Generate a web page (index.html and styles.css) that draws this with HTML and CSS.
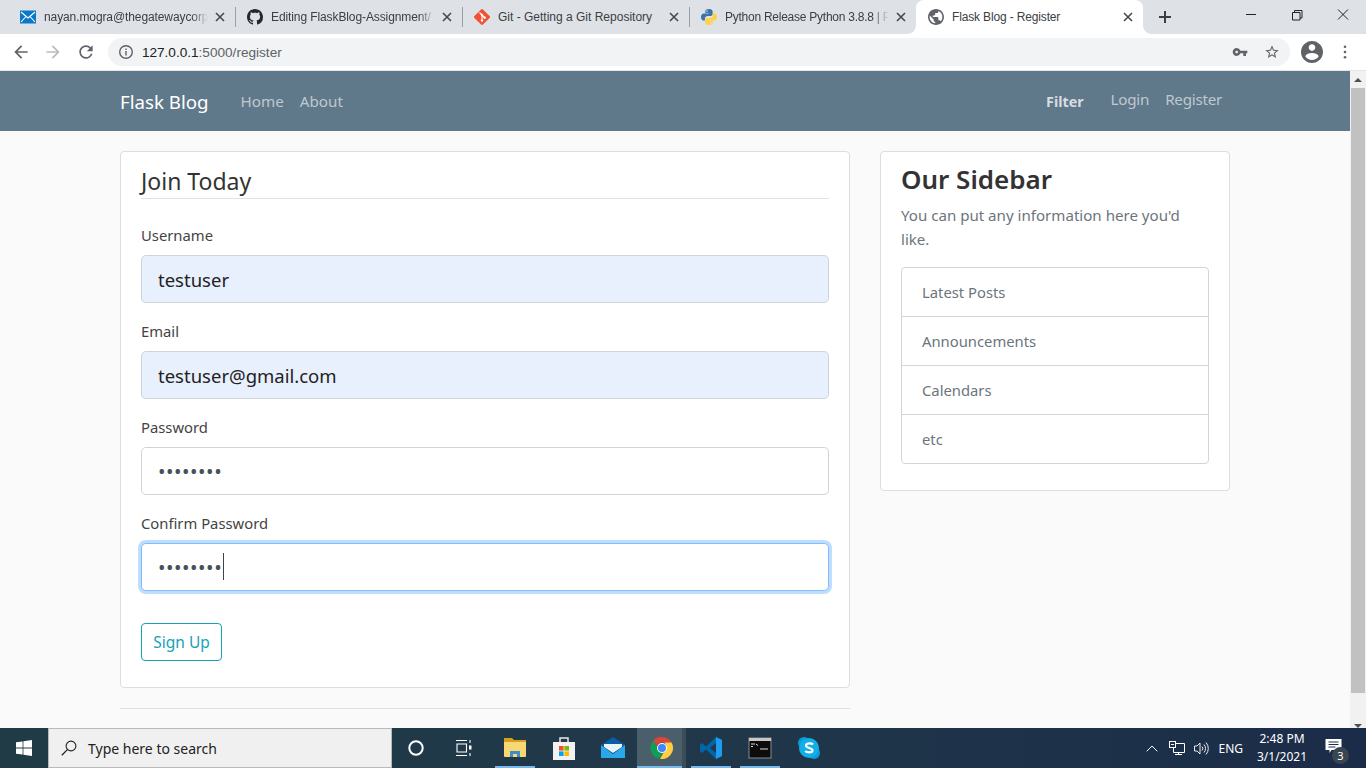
FILE: index.html
```html
<!DOCTYPE html>
<html lang="en">
<head>
<meta charset="utf-8">
<title>Flask Blog - Register</title>
<link rel="stylesheet" href="styles.css">
</head>
<body>
<header class="tabstrip">
  <div class="tab">
    <svg class="favicon" viewBox="0 0 16 16"><rect y="1.5" width="16" height="13" fill="#0a78c8"/><path d="M1 3l7 6 7-6M1 13l5-5.5M15 13l-5-5.5" fill="none" stroke="#fff" stroke-width="1.1"/></svg>
    <span class="tab-title">nayan.mogra@thegatewaycorp</span>
    <svg class="tab-x" viewBox="0 0 10 10"><path d="M1 1l8 8M9 1l-8 8"/></svg>
  </div>
  <div class="tab">
    <svg class="favicon" viewBox="0 0 16 16"><path fill="#24292e" d="M8 0C3.58 0 0 3.58 0 8c0 3.54 2.29 6.53 5.47 7.59.4.07.55-.17.55-.38 0-.19-.01-.82-.01-1.49-2.01.37-2.53-.49-2.69-.94-.09-.23-.48-.94-.82-1.13-.28-.15-.68-.52-.01-.53.63-.01 1.08.58 1.23.82.72 1.21 1.87.87 2.33.66.07-.52.28-.87.51-1.07-1.78-.2-3.64-.89-3.64-3.95 0-.87.31-1.59.82-2.15-.08-.2-.36-1.02.08-2.12 0 0 .67-.21 2.2.82.64-.18 1.32-.27 2-.27.68 0 1.36.09 2 .27 1.53-1.04 2.2-.82 2.2-.82.44 1.1.16 1.92.08 2.12.51.56.82 1.27.82 2.15 0 3.07-1.87 3.75-3.65 3.95.29.25.54.73.54 1.48 0 1.07-.01 1.93-.01 2.2 0 .21.15.46.55.38A8.013 8.013 0 0016 8c0-4.42-3.58-8-8-8z"/></svg>
    <span class="tab-title">Editing FlaskBlog-Assignment/</span>
    <svg class="tab-x" viewBox="0 0 10 10"><path d="M1 1l8 8M9 1l-8 8"/></svg>
  </div>
  <div class="tab">
    <svg class="favicon" viewBox="0 0 16 16"><path fill="#f05033" d="M7.1.4a1.3 1.3 0 011.8 0l6.7 6.7a1.3 1.3 0 010 1.8l-6.7 6.7a1.3 1.3 0 01-1.8 0L.4 8.900a1.300 1.300 0 010-1.800z"/><path d="M5.500 3.500l5 5M8 6v6" stroke="#fff" stroke-width="1.100" fill="none"/><circle cx="8" cy="6" r="1.200" fill="#fff"/><circle cx="8" cy="11.500" r="1.200" fill="#fff"/><circle cx="10.700" cy="8.700" r="1.200" fill="#fff"/></svg>
    <span class="tab-title tab-title-full">Git - Getting a Git Repository</span>
    <svg class="tab-x" viewBox="0 0 10 10"><path d="M1 1l8 8M9 1l-8 8"/></svg>
  </div>
  <div class="tab">
    <svg class="favicon" viewBox="0 0 16 16"><path fill="#3b75a8" d="M8 0C5 0 4.300 1 4.300 2.500V4H8v.6H2.800C1.200 4.600 0 5.800 0 8s1.100 3.500 2.500 3.500h1.400V9.700c0-1.500 1.200-2.700 2.700-2.700h3c1.100 0 2-.9 2-2V2.500C11.600 1 10.500 0 8 0zM6 1.300a.8.8 0 110 1.600.8.8 0 010-1.600z"/><path fill="#fdd23e" d="M8 16c3 0 3.700-1 3.700-2.500V12H8v-.6h5.200c1.600 0 2.800-1.200 2.800-3.400s-1.100-3.500-2.500-3.500h-1.400v1.800c0 1.500-1.200 2.700-2.700 2.700h-3c-1.100 0-2 .9-2 2v2.500C4.400 15 5.500 16 8 16zm2-1.300a.8.8 0 110-1.600.8.8 0 010 1.600z"/></svg>
    <span class="tab-title tab-title-py">Python Release Python 3.8.8 | P</span>
    <svg class="tab-x" viewBox="0 0 10 10"><path d="M1 1l8 8M9 1l-8 8"/></svg>
  </div>
  <div class="tab tab-active">
    <svg class="favicon" viewBox="2 2 20 20"><path fill="#5f6368" d="M12 2C6.48 2 2 6.48 2 12s4.480 10 10 10 10-4.480 10-10S17.520 2 12 2zm-1 17.930c-3.950-.49-7-3.850-7-7.930 0-.62.08-1.210.21-1.790L9 15v1c0 1.100.9 2 2 2v1.930zm6.900-2.540c-.26-.81-1-1.390-1.900-1.390h-1v-3c0-.55-.45-1-1-1H8v-2h2c.55 0 1-.45 1-1V7h2c1.100 0 2-.9 2-2v-.41c2.930 1.190 5 4.060 5 7.410 0 2.080-.8 3.970-2.100 5.390z"/></svg>
    <span class="tab-title tab-title-full tab-title-active">Flask Blog - Register</span>
    <svg class="tab-x" viewBox="0 0 10 10"><path d="M1 1l8 8M9 1l-8 8"/></svg>
  </div>
  <svg class="new-tab" viewBox="0 0 12 12"><path d="M6 0v12M0 6h12"/></svg>
  <div class="win-controls">
    <svg class="win-btn" viewBox="0 0 46 30"><path d="M18 14.500h10"/></svg>
    <svg class="win-btn" viewBox="0 0 46 30"><path d="M18.500 12.500h7.500v7.500h-7.500zM20.500 12.500v-2h7.500v7.500h-2"/></svg>
    <svg class="win-btn" viewBox="0 0 46 30"><path d="M18 9.500l10 10M28 9.500l-10 10"/></svg>
  </div>
</header>

<div class="toolbar">
  <svg class="tool-icon" viewBox="0 0 24 24"><path d="M20 11H7.830l5.590-5.590L12 4l-8 8 8 8 1.410-1.410L7.830 13H20v-2z"/></svg>
  <svg class="tool-icon tool-off" viewBox="0 0 24 24"><path d="M4 11h12.170l-5.590-5.590L12 4l8 8-8 8-1.410-1.410L16.170 13H4v-2z"/></svg>
  <svg class="tool-icon" viewBox="0 0 24 24"><path d="M17.650 6.350A7.958 7.958 0 0012 4c-4.420 0-7.990 3.580-7.990 8s3.570 8 7.990 8c3.730 0 6.840-2.550 7.730-6h-2.080A5.990 5.990 0 0112 18c-3.310 0-6-2.690-6-6s2.690-6 6-6c1.660 0 3.140.69 4.220 1.780L13 11h7V4l-2.350 2.350z"/></svg>
  <div class="omnibox">
    <svg class="omni-info" viewBox="0 0 16 16"><circle cx="8" cy="8" r="6.300" fill="none" stroke="#5f6368" stroke-width="1.400"/><path d="M7.300 7h1.400v4.500H7.300zM7.300 4.500h1.400v1.400H7.300z" fill="#5f6368"/></svg>
    <span class="url"><span class="url-host">127.0.0.1</span>:5000/register</span>
    <svg class="omni-icon" viewBox="0 0 24 24"><path d="M12.650 10A5.990 5.990 0 007 6c-3.310 0-6 2.690-6 6s2.690 6 6 6a5.990 5.990 0 005.650-4H17v4h4v-4h2v-4H12.650zM7 14c-1.100 0-2-.9-2-2s.9-2 2-2 2 .9 2 2-.9 2-2 2z"/></svg>
    <svg class="omni-icon" viewBox="0 0 24 24"><path d="M22 9.240l-7.190-.62L12 2 9.190 8.630 2 9.240l5.460 4.730L5.820 21 12 17.270 18.180 21l-1.630-7.030L22 9.240zM12 15.400l-3.760 2.270 1-4.280-3.320-2.880 4.380-.38L12 6.100l1.710 4.040 4.380.38-3.320 2.880 1 4.280L12 15.400z"/></svg>
  </div>
  <svg class="avatar" viewBox="2 2 20 20"><path d="M12 2C6.480 2 2 6.480 2 12s4.480 10 10 10 10-4.480 10-10S17.520 2 12 2zm0 3c1.660 0 3 1.340 3 3s-1.340 3-3 3-3-1.340-3-3 1.340-3 3-3zm0 14.200c-2.500 0-4.710-1.280-6-3.220.03-1.990 4-3.080 6-3.080 1.990 0 5.970 1.090 6 3.080-1.290 1.940-3.500 3.220-6 3.220z"/></svg>
  <svg class="kebab" viewBox="0 0 4 16"><circle cx="2" cy="2" r="1.500"/><circle cx="2" cy="8" r="1.500"/><circle cx="2" cy="14" r="1.500"/></svg>
</div>

<div class="viewport">
  <div class="page">
    <nav class="navbar">
      <a class="brand">Flask Blog</a>
      <a class="nav-link">Home</a>
      <a class="nav-link">About</a>
      <span class="nav-spacer"></span>
      <a class="nav-filter">Filter</a>
      <a class="nav-link nav-link-up">Login</a>
      <a class="nav-link nav-link-up">Register</a>
    </nav>
    <main class="container">
      <div class="col-main">
        <form class="card form-card">
          <legend class="legend">Join Today</legend>
          <div class="field">
            <label class="label">Username</label>
            <input class="input autofilled" type="text" value="testuser">
          </div>
          <div class="field">
            <label class="label">Email</label>
            <input class="input autofilled" type="text" value="testuser@gmail.com">
          </div>
          <div class="field">
            <label class="label">Password</label>
            <input class="input input-pw" type="password" value="password">
          </div>
          <div class="field">
            <label class="label">Confirm Password</label>
            <div class="input-wrap">
              <input class="input input-pw input-focus" type="password" value="password">
              <span class="caret"></span>
            </div>
          </div>
          <button class="btn" type="button">Sign Up</button>
        </form>
        <hr class="rule">
      </div>
      <aside class="col-side">
        <div class="card side-card">
          <h3 class="side-title">Our Sidebar</h3>
          <p class="side-text">You can put any information here you'd like.</p>
          <ul class="list">
            <li class="list-item">Latest Posts</li>
            <li class="list-item">Announcements</li>
            <li class="list-item">Calendars</li>
            <li class="list-item">etc</li>
          </ul>
        </div>
      </aside>
    </main>
  </div>
  <div class="scrollbar">
    <svg class="scroll-arrow" viewBox="0 0 16 17"><path d="M4 11l4-4 4 4z"/></svg>
    <div class="scroll-track"><div class="scroll-thumb"></div></div>
    <svg class="scroll-arrow" viewBox="0 0 16 17"><path d="M4 6l4 4 4-4z"/></svg>
  </div>
</div>

<footer class="taskbar">
  <div class="start">
    <svg class="start-logo" viewBox="0 0 16 16"><path fill="#fff" d="M0 2.300l6.600-.9v6.200H0zM7.400 1.300L16 0v7.600H7.400zM0 8.400h6.600v6.200L0 13.700zM7.400 8.400H16V16l-8.600-1.300z"/></svg>
  </div>
  <div class="search">
    <svg class="search-icon" viewBox="0 0 16 16"><circle cx="10" cy="6" r="4.900" fill="none" stroke="#222" stroke-width="1.100"/><path d="M6.400 9.600L.8 15.200" stroke="#222" stroke-width="1.300"/></svg>
    <span class="search-text">Type here to search</span>
  </div>
  <div class="task-btn task-wide">
    <svg class="task-svg" viewBox="0 0 18 18"><circle cx="9" cy="9" r="6.700" fill="none" stroke="#fff" stroke-width="2"/></svg>
  </div>
  <div class="task-btn task-wide">
    <svg class="task-svg" viewBox="0 0 18 18"><path d="M1 1.500h11M1 16.500h11M2 5h9.500v8H2zM15 1v3M15 14v3" fill="none" stroke="#fff" stroke-width="1.100"/><rect x="14" y="6.500" width="2.500" height="4" fill="#fff"/></svg>
  </div>
  <div class="task-gap"></div>
  <div class="task-btn task-open">
    <svg class="app-icon" viewBox="0 0 24 24"><path fill="#d6a21e" d="M1 2h8l2 2h12v5H1z"/><path fill="#f8d775" d="M1 6h22v14a1 1 0 01-1 1H2a1 1 0 01-1-1z"/><path fill="#3f8ccc" d="M7 15h10v6h-3v-3h-4v3H7z"/></svg>
  </div>
  <div class="task-btn">
    <svg class="app-icon" viewBox="0 0 24 24"><path fill="none" stroke="#e8e8e8" stroke-width="1.500" d="M8 6V2h8v4"/><path fill="#f2f2f2" d="M1 6h22v18H1z"/><rect x="7" y="10" width="4.600" height="4.600" fill="#f25022"/><rect x="12.400" y="10" width="4.600" height="4.600" fill="#7fba00"/><rect x="7" y="15.400" width="4.600" height="4.600" fill="#00a4ef"/><rect x="12.400" y="15.400" width="4.600" height="4.600" fill="#ffb900"/></svg>
  </div>
  <div class="task-btn">
    <svg class="app-icon" viewBox="0 0 24 24"><path fill="#0a5ea8" d="M0 9l12-8 12 8-12 7z"/><path fill="#e8f4fc" d="M3 8h18v3l-9 6-9-6z"/><path fill="#28a8ea" d="M0 9l12 9 12-9v13H0z"/></svg>
  </div>
  <div class="task-btn task-active">
    <svg class="app-icon" viewBox="0 0 24 24"><path fill="#db4437" d="M12 1a11 11 0 019.530 5.500H12a5.500 5.500 0 00-5.200 3.700L3.300 4.400A11 11 0 0112 1z"/><path fill="#0f9d58" d="M3.300 4.400l4.700 8.200a5.500 5.500 0 004.600 4.900L8.900 22.600A11 11 0 013.300 4.400z"/><path fill="#ffcd40" d="M21.530 6.500A11 11 0 0110 22.800l4.800-8.300a5.500 5.500 0 00-.6-8z"/><circle cx="12" cy="12" r="5" fill="#fff"/><circle cx="12" cy="12" r="4" fill="#4285f4"/></svg>
  </div>
  <div class="task-btn task-open">
    <svg class="app-icon" viewBox="0 0 24 24"><path fill="#0065a9" d="M17 1l6 3v16l-6 3-10-9.500L3 17 1 15.500v-7L3 7l4 3.500zm0 6l-6 5 6 5z"/><path fill="#1f9cf0" d="M17 1l6 3v16l-6 3z"/></svg>
  </div>
  <div class="task-btn task-open">
    <svg class="app-icon" viewBox="0 0 24 24"><rect x="1" y="2" width="22" height="20" fill="#0c0c0c" stroke="#8a8a8a"/><rect x="1" y="2" width="22" height="3" fill="#c8c8c8"/><path d="M3 8h4M3 10.500h2M8 8l2 1.500M12 13h8" stroke="#ddd" stroke-width="1" fill="none"/></svg>
  </div>
  <div class="task-btn">
    <svg class="app-icon" viewBox="0 0 24 24"><circle cx="7" cy="7" r="6" fill="#0a9bdc"/><circle cx="17" cy="17" r="6" fill="#0a9bdc"/><circle cx="12" cy="12" r="10" fill="#12aee8"/><path d="M16 8.500c-1-1.200-6.500-2-7 1-.4 3 7 2 6.500 5.200-.5 2.300-5.800 2-7.300.3" fill="none" stroke="#fff" stroke-width="2.200"/></svg>
  </div>
  <span class="task-spacer"></span>
  <svg class="tray-chevron" viewBox="0 0 12 7"><path d="M.7 6.300L6 1l5.300 5.300" fill="none" stroke="#fff"/></svg>
  <svg class="tray-net" viewBox="0 0 16 15"><path d="M4.500 2.500h11v9h-11zM9.500 11.500v2M6 13.500h7" fill="none" stroke="#fff"/><rect x=".5" y=".5" width="6" height="6" fill="#1c2f48" stroke="#fff"/><path d="M2 3.500h3" stroke="#fff"/></svg>
  <svg class="tray-vol" viewBox="0 0 16 15"><path d="M.5 5h2.500l3-3v11l-3-3H.5zM8 5.500a3 3 0 010 4M10 3.500a6 6 0 010 8M12 1.500a9 9 0 010 12" fill="none" stroke="#fff" stroke-width=".9"/></svg>
  <span class="tray-lang">ENG</span>
  <div class="clock"><span>2:48 PM</span><span>3/1/2021</span></div>
  <div class="notify">
    <svg class="notify-icon" viewBox="0 0 16 14"><path fill="#fff" d="M0 0h16v11H6l-2 3v-3H0z"/><path d="M3 3h10M3 5.500h10M3 8h7" stroke="#1c2f48"/></svg>
    <span class="notify-badge">3</span>
  </div>
</footer>
</body>
</html>
```
FILE: styles.css
```css
* { box-sizing: border-box; }
html, body { margin: 0; height: 768px; overflow: hidden; }
body { display: flex; flex-direction: column; width: 1366px; font-family: "Noto Sans", sans-serif; color: #444; }

/* browser tabs */
.tabstrip { display: flex; align-items: stretch; height: 34px; padding-left: 8px; background: #dee1e6; flex: none; }
.tab { display: flex; align-items: center; width: 227px; height: 34px; padding: 0 10px 0 12px; position: relative; }
.tab:nth-child(-n+3)::after { content: ""; position: absolute; right: -1px; top: 7px; height: 20px; width: 1px; background: #9aa0a6; }
.tab-active { background: #fff; border-radius: 8px 8px 0 0; }
.tab-active::before, .tab-active::after { content: ""; position: absolute; bottom: 0; width: 8px; height: 8px; }
.tab-active::before { left: -8px; background: radial-gradient(circle at 0 0, #dee1e6 7.500px, #fff 8px); }
.tab-active::after { right: -8px; background: radial-gradient(circle at 100% 0, #dee1e6 7.500px, #fff 8px); }
.favicon { width: 16px; height: 16px; flex: none; margin-right: 8px; }
.tab-title { flex: 1; min-width: 0; white-space: nowrap; overflow: hidden; font-family: "Liberation Sans", sans-serif; font-size: 12px; letter-spacing: -.1px; color: #3c4043; -webkit-mask-image: linear-gradient(to right, #000 90%, transparent 100%); mask-image: linear-gradient(to right, #000 90%, transparent 100%); }
.tab-title-full { letter-spacing: 0; -webkit-mask-image: none; mask-image: none; }
.tab-title-active { letter-spacing: -.15px; }
.tab-title-py { letter-spacing: -.25px; }
.tab-x { width: 10px; height: 10px; flex: none; margin-left: 7px; fill: none; stroke: #45484c; stroke-width: 1.6; }
.new-tab { width: 12px; height: 12px; flex: none; align-self: center; margin: 0 0 0 16px; fill: none; stroke: #3c4043; stroke-width: 2; }
.win-controls { margin-left: auto; display: flex; align-self: flex-start; }
.win-btn { width: 46px; height: 30px; fill: none; stroke: #222; stroke-width: 1; }

/* toolbar */
.toolbar { display: flex; align-items: center; height: 37px; padding: 0 8px 0 11px; background: #fff; border-bottom: 1px solid #e3e5e8; flex: none; }
.tool-icon { width: 20px; height: 20px; flex: none; margin-right: 12.300px; fill: #5f6368; }
.tool-off { fill: #b9bcc0; }
.omnibox { display: flex; align-items: center; flex: 1; height: 28px; margin: 0 11px 0 0; padding: 0 10px 0 10px; background: #f1f3f4; border-radius: 14px; }
.omni-info { width: 16px; height: 16px; flex: none; }
.url { flex: 1; margin-left: 8px; font-family: "Liberation Sans", sans-serif; font-size: 13.600px; color: #5f6368; }
.url-host { color: #202124; }
.omni-icon { width: 16px; height: 16px; flex: none; margin-left: 16px; fill: #5f6368; }
.avatar { width: 22px; height: 22px; flex: none; fill: #5f6368; }
.kebab { width: 4px; height: 14px; flex: none; margin: 0 11px 0 20px; fill: #5f6368; }

/* page */
.viewport { display: flex; height: 657px; flex: none; overflow: hidden; background: #fafafa; }
.page { flex: 1; min-width: 0; }
.navbar { display: flex; align-items: center; height: 60px; padding: 0 120px; background: #5f788a; }
.brand { font-size: 18.700px; line-height: 30px; color: #fff; margin-right: 32px; position: relative; top: 1px; }
.nav-link { font-size: 15.200px; color: rgba(255,255,255,.6); margin-right: 16px; }
.nav-link-up { position: relative; top: -2px; letter-spacing: -.25px; }
.nav-link:last-child { margin-right: 8px; }
.nav-spacer { flex: 1; }
.nav-filter { font-size: 14.300px; font-weight: 700; color: rgba(255,255,255,.75); margin-right: 27px; }
.container { display: flex; padding: 20px 120px 0; }
.col-main { width: 730px; flex: none; }
.col-side { width: 350px; flex: none; margin-left: 30px; }
.card { background: #fff; border: 1px solid #ddd; border-radius: 4px; padding: 10px 20px 26px; }
.form-card { height: 537px; }
.legend { display: block; width: 100%; font-size: 23px; line-height: 38px; color: #333; border-bottom: 1px solid #dee2e6; height: 37px; padding: 0; margin-bottom: 24px; }
.field { margin-bottom: 16px; height: 80px; }
.label { display: block; font-size: 14.800px; line-height: 24px; margin-bottom: 8px; color: #444; height: 24px; }
.input { display: block; width: 100%; height: 48px; padding: 0 16px; font: 18.500px/30px "Noto Sans", sans-serif; color: #222; background: #fff; border: 1px solid #ced4da; border-radius: 4.800px; outline: none; }
.autofilled { background: #e8f0fe; }
.input-pw { font-size: 20px; letter-spacing: .5px; color: #495057; }
.input-focus { border-color: #80bdff; box-shadow: 0 0 0 3px rgba(0,123,255,.25); }
.input-wrap { position: relative; }
.caret { position: absolute; left: 82px; top: 10px; width: 1px; height: 27px; background: #444; }
.btn { display: block; width: 81px; height: 38px; margin-top: 32px; padding: 0; font: 15.500px "Noto Sans", sans-serif; color: #17a2b8; background: transparent; border: 1px solid #17a2b8; border-radius: 4px; }
.rule { margin: 20px 0 0; border: 0; border-top: 1px solid #dedede; }
.side-card { height: 340px; }
.side-title { margin: 0 0 8px; font-size: 26px; line-height: 34px; font-weight: 600; color: #333; }
.side-text { margin: 0 0 15px; font-size: 15.100px; line-height: 24px; color: #6c757d; position: relative; top: -1px; }
.list { margin: 0; padding: 0; list-style: none; border: 1px solid #d5d5d5; border-radius: 4px; }
.list-item { height: 49px; padding: 0 20px; font-size: 14.800px; line-height: 48px; color: #6c757d; border-bottom: 1px solid #d5d5d5; }
.list-item:last-child { height: 48px; border-bottom: 0; }

/* scrollbar */
.scrollbar { width: 16px; flex: none; display: flex; flex-direction: column; background: #f1f1f1; }
.scroll-arrow { width: 16px; height: 17px; flex: none; fill: #505050; }
.scroll-track { flex: 1; padding: 0 1px 25px; }
.scroll-thumb { height: 605px; background: #c1c1c1; }

/* taskbar */
.taskbar { display: flex; align-items: stretch; height: 40px; flex: none; background: linear-gradient(to right, #213b46 0%, #20384a 50%, #1b2c48 100%); }
.start { width: 48px; display: flex; align-items: center; justify-content: center; flex: none; }
.start-logo { width: 16px; height: 16px; }
.search { width: 344px; display: flex; align-items: center; padding-left: 12px; background: #f0f0f0; border: 1px solid #b8b8b8; flex: none; }
.search-icon { width: 16px; height: 16px; flex: none; }
.search-text { margin-left: 11px; font-family: "Noto Sans", sans-serif; font-size: 14px; color: #222; }
.task-btn { width: 49px; display: flex; align-items: center; justify-content: center; flex: none; position: relative; }
.task-wide { width: 48px; }
.task-gap { width: 2px; flex: none; }
.task-svg { width: 18px; height: 18px; }
.app-icon { width: 24px; height: 24px; }
.task-open::after, .task-active::after { content: ""; position: absolute; left: 5px; right: 4px; bottom: 0; height: 2px; background: #76b9ed; }
.task-active { background: linear-gradient(to right, #4a5f6a 45px, #3a4d59 45px); }
.task-active::after { left: 0; right: 4px; }
.task-spacer { flex: 1; }
.tray-chevron { width: 12px; height: 7px; align-self: center; flex: none; margin-right: 11px; }
.tray-net { width: 16px; height: 15px; align-self: center; flex: none; margin-right: 9px; }
.tray-vol { width: 16px; height: 15px; align-self: center; flex: none; margin-right: 8px; }
.tray-lang { align-self: center; font-size: 12px; color: #fff; margin-right: 7px; }
.clock { display: flex; flex-direction: column; align-items: center; justify-content: center; width: 64px; font-size: 12px; line-height: 18px; color: #fff; }
.notify { width: 52px; position: relative; flex: none; display: flex; align-items: center; justify-content: center; }
.notify-icon { width: 17px; height: 14px; margin-right: 14px; margin-top: -4px; }
.notify-badge { position: absolute; left: 18px; top: 19px; width: 17px; height: 17px; border-radius: 50%; background: #3a4550; font-size: 11px; line-height: 17px; text-align: center; color: #fff; }
```
